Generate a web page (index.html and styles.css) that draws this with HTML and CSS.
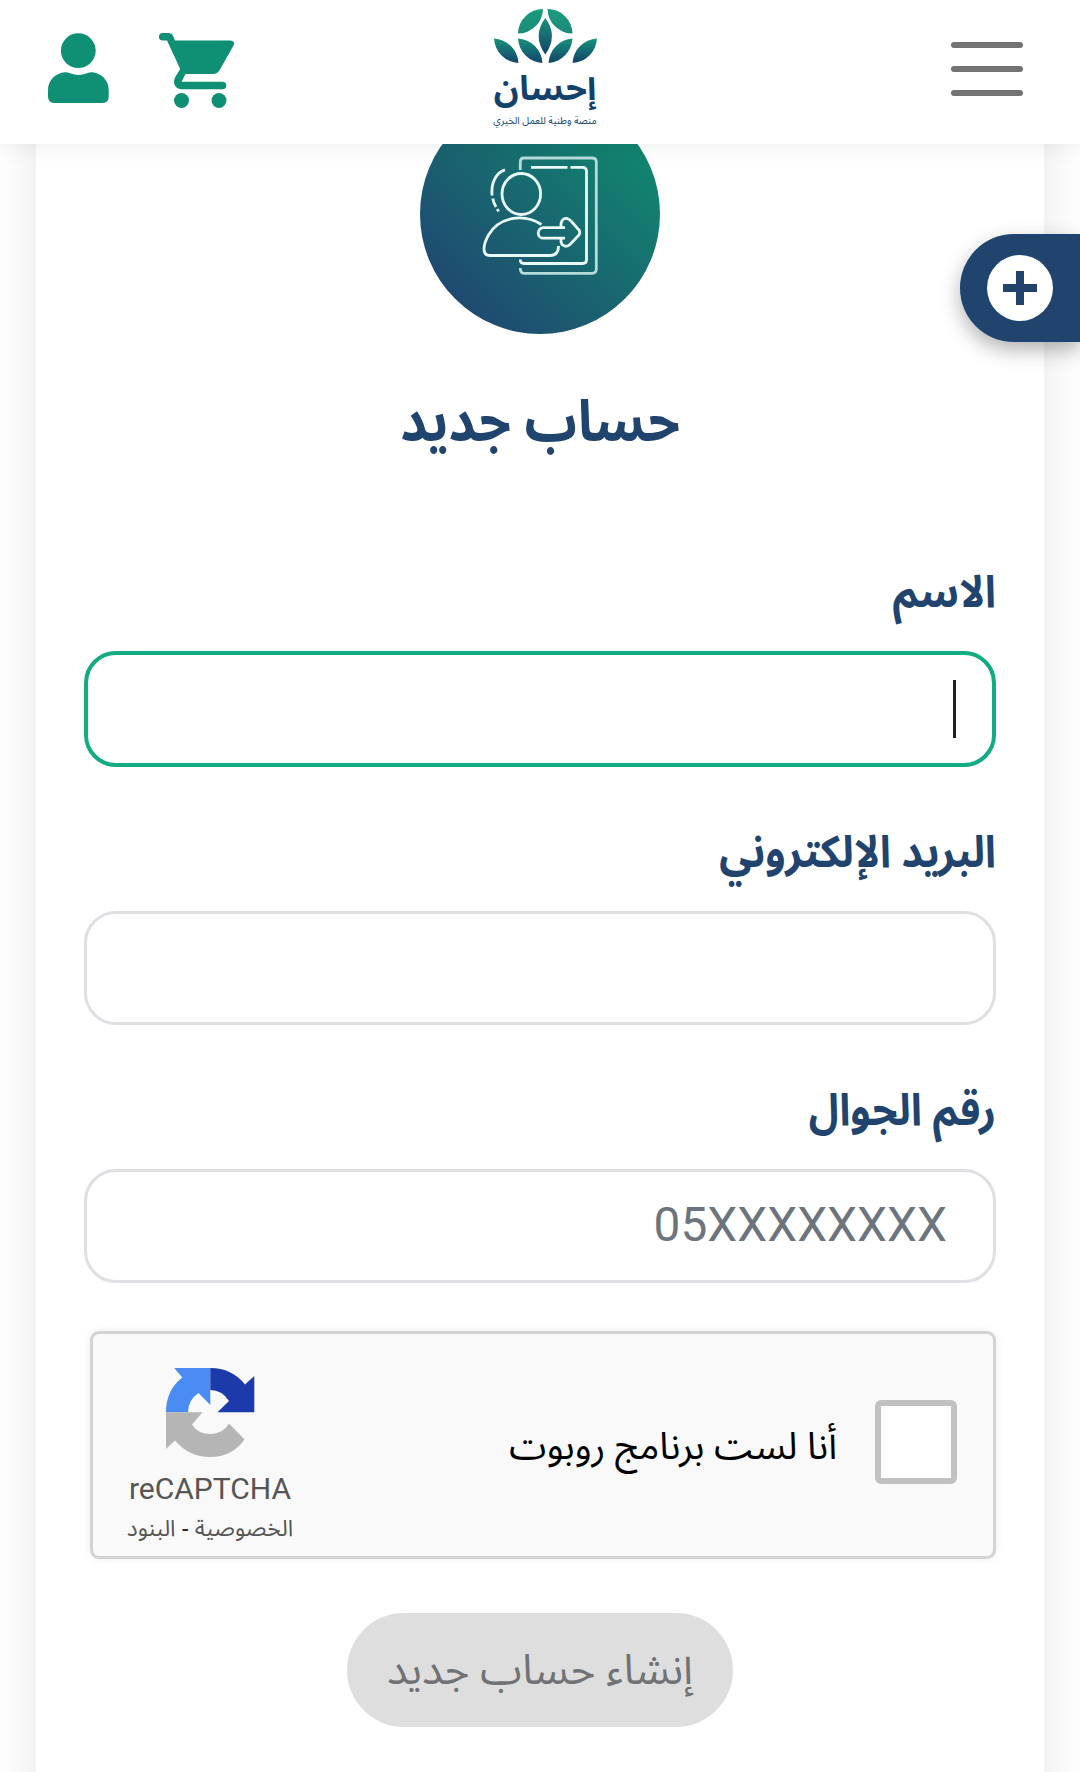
FILE: index.html
```html
<!DOCTYPE html>
<html lang="ar" dir="rtl">
<head>
    <meta charset="UTF-8">
    <meta name="viewport" content="width=device-width, initial-scale=1.0">
    <title>إحسان - حساب جديد</title>
    <link rel="stylesheet" href="styles.css">
</head>
<body>

<header class="header">
    <button class="menu-button" aria-label="القائمة">
        <span></span>
        <span></span>
        <span></span>
    </button>

    <a class="logo" href="#">
        <svg class="logo-mark" viewBox="493 8 103 56">
            <defs>
                <linearGradient id="leafTop" x1="0" y1="0" x2="0" y2="1">
                    <stop offset="0" stop-color="#1b9c7c"/>
                    <stop offset="1" stop-color="#1b8a7a"/>
                </linearGradient>
                <linearGradient id="leaf" x1="0" y1="0" x2="0" y2="1">
                    <stop offset="0" stop-color="#18927a"/>
                    <stop offset="1" stop-color="#12426b"/>
                </linearGradient>
            </defs>
            <path fill="url(#leafTop)" d="M517 33.5A25 25 0 0 1 542 9A25 25 0 0 1 517 33.5ZM571.5 33.5A25 25 0 0 0 546.5 9A25 25 0 0 0 571.5 33.5Z"/>
            <path fill="url(#leaf)" d="M544.3 18Q557.5 36 544.3 54.5Q531 36 544.3 18Z"/>
            <path fill="url(#leaf)" d="M493 38.5A26 26 0 0 1 517.5 63A26 26 0 0 1 493 38.5ZM517 38.5A26 26 0 0 1 541.5 63A26 26 0 0 1 517 38.5ZM571.5 38.5A26 26 0 0 0 547.5 63A26 26 0 0 0 571.5 38.5ZM596 38.5A26 26 0 0 0 571.5 63A26 26 0 0 0 596 38.5Z"/>
        </svg>
        <span class="logo-name">إحسان</span>
        <span class="logo-tagline">منصة وطنية للعمل الخيري</span>
    </a>

    <nav class="header-actions">
        <a href="#" aria-label="السلة">
            <svg width="75" height="75" viewBox="159 33 75 75" fill="#0f8f74">
                <path d="M162.7 33H169Q171.700 33 173 35.500L175 40.500H230.500Q235.500 41 233.500 45.500L220 69.500Q217.500 74 213 74H185.500L181.500 81.700H222.500A3.750 3.750 0 0 1 222.500 89.200H181.500C175 89 172.500 83 175 77.500L180.200 69L167 40.500H162.700A3.750 3.750 0 0 1 162.700 33Z"/>
                <circle cx="181.500" cy="100.500" r="7.500"/>
                <circle cx="219" cy="100.500" r="7.500"/>
            </svg>
        </a>
        <a href="#" aria-label="حسابي">
            <svg width="61" height="70" viewBox="48 33 61 70" fill="#0f8f74">
                <circle cx="78.300" cy="50.700" r="17.400"/>
                <path d="M65 72.300Q68 72.300 70 73.300Q78.500 76.500 87 73.300Q89 72.300 92 72.300C101 73 108.700 80 108.700 90V97Q108.500 103 102 103H54Q48.200 102.500 48 97V90C48 80 56 73 65 72.300Z"/>
            </svg>
        </a>
    </nav>
</header>

<button class="float-tab" aria-label="المزيد">
    <span class="float-plus"></span>
</button>

<main class="card">
    <svg class="avatar" width="240" height="240" viewBox="420 94 240 240">
        <defs>
            <linearGradient id="disc" x1="0.15" y1="0.85" x2="0.85" y2="0.15">
                <stop offset="0" stop-color="#1f4a70"/>
                <stop offset="1" stop-color="#11866f"/>
            </linearGradient>
        </defs>
        <circle cx="540" cy="214" r="120" fill="url(#disc)"/>
        <g fill="none" stroke="#e9fbf8" stroke-width="2.800">
            <g stroke="#b5dcda">
                <path d="M520.300 170V162Q520.300 158 524 158H592Q596.300 158 596.300 162V269Q596.300 273.300 592 273.300H524Q520.300 273.300 520.300 268"/>
            </g>
            <path d="M531 167.400H567.500M570.500 167.400H582.500Q586.500 167.400 586.500 171.500V260Q586.500 263.500 582.500 263.500H524Q520.300 263.500 520.300 259.500"/>
            <ellipse cx="521.300" cy="194" rx="19.300" ry="20.500"/>
            <path d="M541.500 224.500C523 213 499 217 488.500 235Q484 243 484 249Q484 255.500 490 255.500H550Q558.500 255.500 558.500 246"/>
            <path d="M565 227.600H543.500A5.300 5.300 0 0 0 543.500 238.200H565"/>
            <path d="M561 228V224Q562 218 567 218.500Q569 219 571 221L579 230Q580.500 232.500 579 235L570 244.500Q566 248 562 244.500Q560.500 242 561 238"/>
            <path d="M505 169.800C495 173 491 184 492 195.500M492.800 198.500Q493.500 203 496 207M497.300 209L498.500 211.500"/>
        </g>
    </svg>

    <h1 class="title">حساب جديد</h1>

    <form class="form">
        <div class="field">
            <label>الاسم</label>
            <div class="input focused"><span class="caret"></span></div>
        </div>
        <div class="field">
            <label for="email">البريد الإلكتروني</label>
            <input class="input" type="text" id="email">
        </div>
        <div class="field">
            <label for="mobile">رقم الجوال</label>
            <input class="input" type="text" id="mobile" placeholder="05XXXXXXXX">
        </div>

        <div class="captcha">
            <span class="checkbox"></span>
            <span class="captcha-label">أنا لست برنامج روبوت</span>
            <div class="captcha-brand">
                <svg width="90" height="92" viewBox="165 1367 90 92">
                    <path fill="#4a8cf4" d="M210.300 1368H174.300L182.300 1377.500Q166 1390 166 1412.300H188Q188 1400 198.500 1393L210.300 1405Z"/>
                    <path fill="#1c3aa9" d="M210.300 1368Q232 1368 245 1384.500L254.300 1376V1412.300H217.500L229 1401Q222 1390 210.300 1390Z"/>
                    <path fill="#b5b5b5" d="M166 1412.300H202.500L192 1424.500Q198 1434 210.300 1434Q223 1434 229 1423.500L244.500 1439.500Q232 1457 210.300 1457Q189 1457 175 1440.500L166 1449Z"/>
                </svg>
                <span class="captcha-name">reCAPTCHA</span>
                <span class="captcha-links"><a href="#">الخصوصية</a> <b>-</b> <a href="#">البنود</a></span>
            </div>
        </div>

        <button type="button" class="submit" disabled>إنشاء حساب جديد</button>
    </form>
</main>

</body>
</html>
```
FILE: styles.css
```css
* {
    box-sizing: border-box;
}

body {
    margin: 0;
    height: 1772px;
    overflow: hidden;
    background-color: #fff;
    color: #21446e;
    font-family: "Noto Sans Arabic", "DejaVu Sans", sans-serif;
}

button {
    border: none;
    font-family: inherit;
}

a {
    color: inherit;
    text-decoration: none;
}

.header {
    position: relative;
    z-index: 2;
    display: flex;
    justify-content: space-between;
    height: 144px;
    padding: 0 57px 0 48px;
    background-color: #fff;
    box-shadow: 0 0 24px rgba(0, 0, 0, 0.08);
}

.menu-button {
    display: flex;
    flex-direction: column;
    gap: 18px;
    width: 186px;
    margin-top: 42px;
    padding: 0;
    background: none;
}

.menu-button span {
    width: 72px;
    height: 6px;
    border-radius: 3px;
    background-color: #737373;
}

.logo {
    display: flex;
    flex-direction: column;
    align-items: center;
    width: 103px;
    margin-right: -19px;
    padding-top: 8px;
    color: #12426b;
    white-space: nowrap;
}

.logo-mark {
    width: 103px;
    height: 56px;
}

.logo-name {
    height: 49px;
    font-size: 34.5px;
    font-weight: bold;
    line-height: 51px;
}

.logo-tagline {
    font-size: 9.9px;
    line-height: 16px;
}

.header-actions {
    display: flex;
    justify-content: flex-end;
    gap: 50px;
    width: 186px;
    padding-top: 33px;
}

.float-tab {
    position: absolute;
    z-index: 3;
    top: 234px;
    right: 0;
    display: flex;
    align-items: center;
    justify-content: center;
    width: 120px;
    height: 108px;
    padding: 0;
    border-radius: 54px 0 0 54px;
    background-color: #21446e;
    box-shadow: 0 8px 20px rgba(0, 0, 0, 0.3);
}

.float-plus {
    width: 66px;
    height: 66px;
    border-radius: 50%;
    background:
        linear-gradient(#21446e, #21446e) center / 34px 8px no-repeat,
        linear-gradient(#21446e, #21446e) center / 8px 34px no-repeat,
        #fff;
}

.card {
    display: flex;
    flex-direction: column;
    align-items: center;
    height: 1800px;
    margin: -120px 36px 0;
    padding: 70px 48px 0;
    background-color: #fff;
    box-shadow: 0 0 48px rgba(0, 0, 0, 0.1);
}

.avatar {
    flex: none;
}

.title {
    height: 90px;
    margin: 46px 0 0;
    font-size: 52px;
    line-height: 90px;
    white-space: nowrap;
    transform: scaleY(1.1);
    transform-origin: 50% 68%;
}

.form {
    display: flex;
    flex-direction: column;
    width: 912px;
    margin-top: 85px;
}

.field {
    margin-bottom: 48px;
}

.field label {
    display: block;
    height: 96px;
    font-size: 41px;
    font-weight: bold;
    line-height: 79px;
    transform: scaleY(1.08);
    transform-origin: 50% 54%;
}

.input {
    display: flex;
    align-items: center;
    width: 100%;
    height: 114px;
    padding: 0 46px 2px;
    border: 3px solid #dee0e3;
    border-radius: 32px;
    background-color: #fff;
    font-family: Roboto, sans-serif;
    font-size: 47.8px;
}

.input::placeholder {
    color: #6c757d;
    opacity: 1;
}

.input.focused {
    height: 116px;
    padding: 0 36px;
    border: 4px solid #13ab82;
}

.caret {
    width: 3px;
    height: 58px;
    background-color: #222;
}

.captcha {
    display: flex;
    align-items: center;
    height: 228px;
    margin-left: 6px;
    padding: 0 36px 0 29px;
    border: 3px solid #d3d3d3;
    border-radius: 9px;
    background-color: #f9f9f9;
    box-shadow: 0 0 9px rgba(0, 0, 0, 0.08);
}

.checkbox {
    width: 82px;
    height: 84px;
    margin-top: -6px;
    border: 6px solid #c1c1c1;
    border-radius: 6px;
    background-color: #fff;
}

.captcha-label {
    margin-right: 38px;
    padding-top: 4px;
    color: #000;
    font-size: 37.7px;
    white-space: nowrap;
}

.captcha-brand {
    display: flex;
    flex-direction: column;
    align-items: center;
    width: 176px;
    margin-right: auto;
    padding-top: 25px;
    color: #555;
}

.captcha-name {
    margin-top: 10px;
    font-family: Roboto, sans-serif;
    font-size: 30px;
    line-height: 40px;
}

.captcha-links {
    font-size: 22.8px;
    line-height: 40px;
    white-space: nowrap;
}

.captcha-links b {
    color: #222;
    font-weight: normal;
}

.submit {
    align-self: center;
    width: 386px;
    height: 114px;
    margin-top: 54px;
    padding: 0;
    border-radius: 57px;
    background-color: #dedede;
    color: #717275;
    font-size: 42.2px;
    white-space: nowrap;
}
```
